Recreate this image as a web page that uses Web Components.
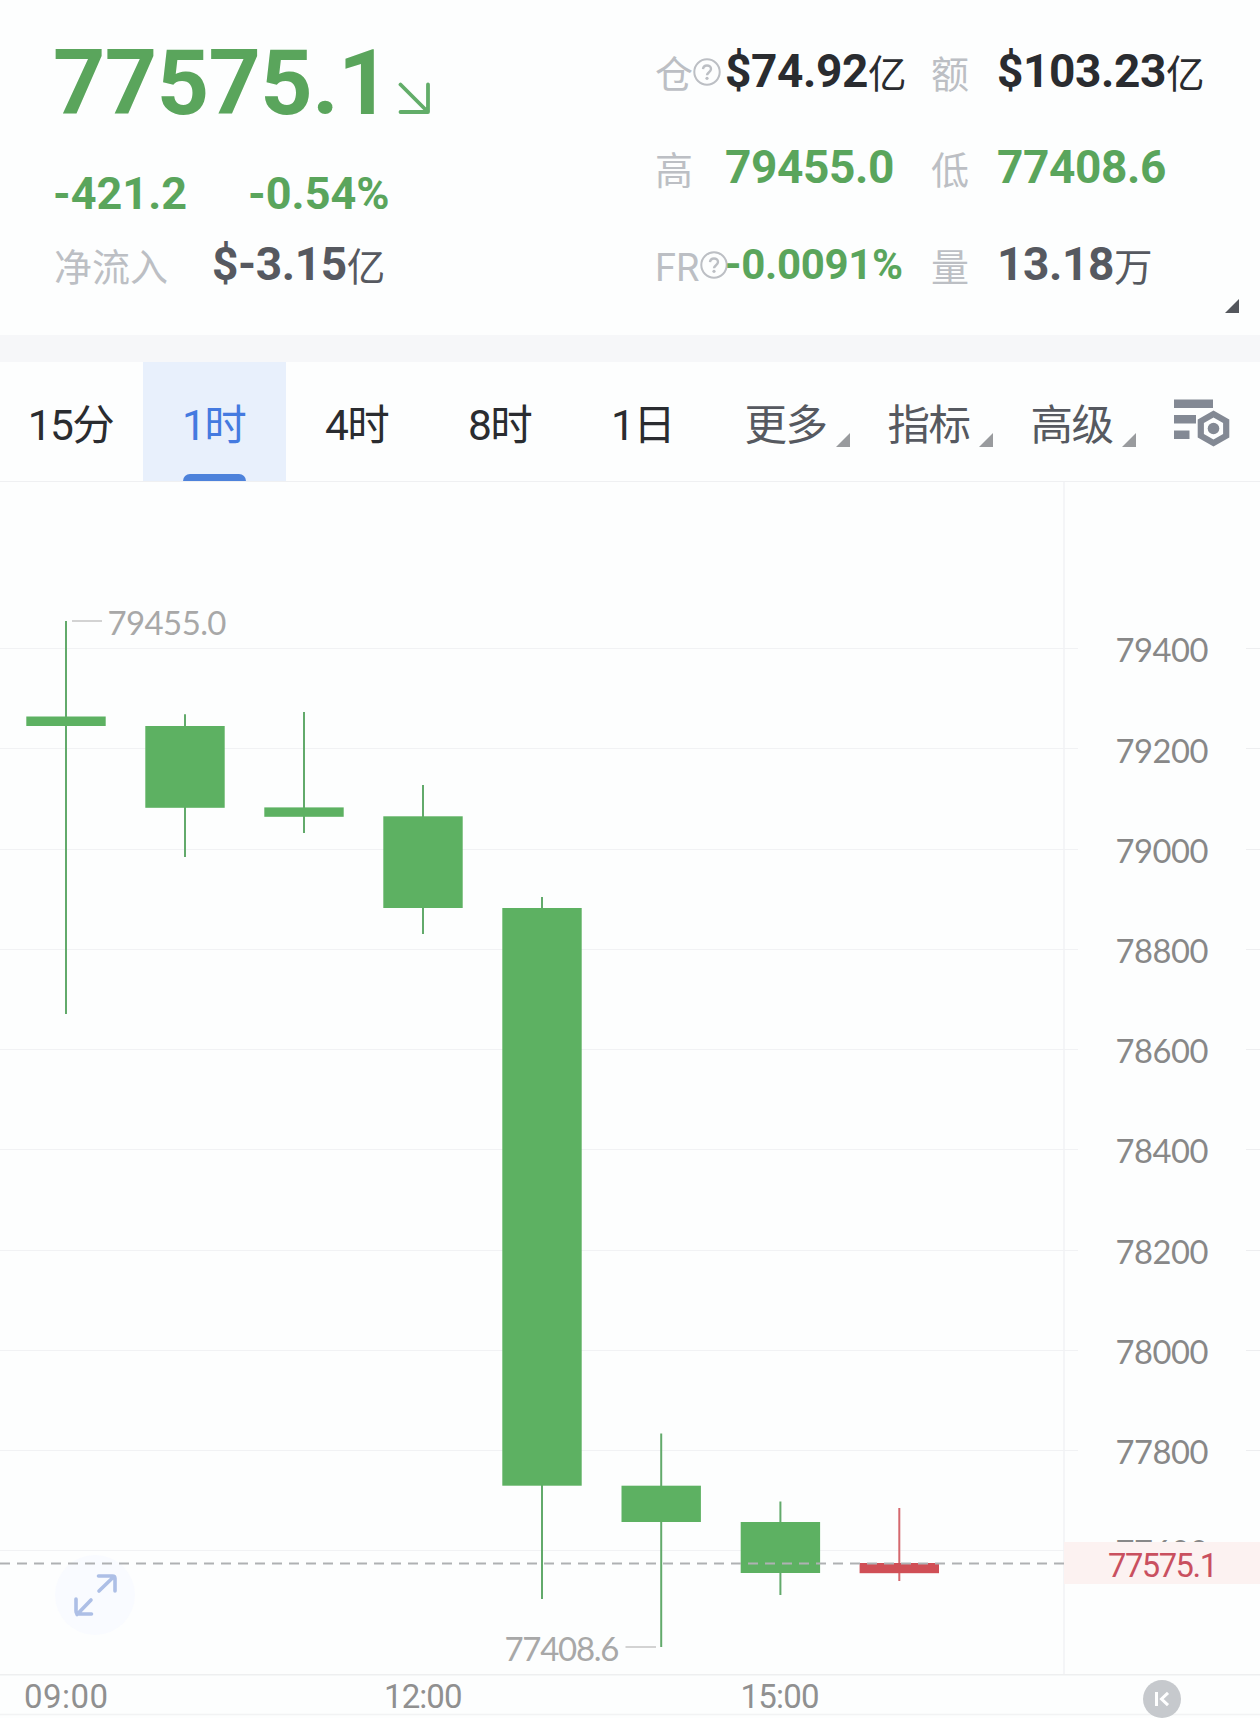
<!DOCTYPE html>
<html lang="zh-CN">
<head>
<meta charset="utf-8">
<title>K线行情</title>
<style>
  html, body { margin: 0; background: #fdfefe; }
  body { font-family: Roboto, "Noto Sans CJK SC", sans-serif; width: 1260px; height: 1718px; overflow: hidden; }
</style>
</head>
<body>
<market-page></market-page>
<script>
const define = (name, html, setup) => {
  const tpl = document.createElement('template');
  tpl.innerHTML = html;
  customElements.define(name, class extends HTMLElement {
    connectedCallback() {
      if (this.shadowRoot) return;
      const root = this.attachShadow({ mode: 'open' });
      root.append(tpl.content.cloneNode(true));
      if (setup) setup(this, root);
    }
  });
};

define('help-icon', `
<style>:host{display:block;width:28px;height:28px;flex:none}svg{display:block}</style>
<svg width="28" height="28" viewBox="0 0 28 28" fill="none" stroke="#bcbfc4" stroke-width="2">
  <circle cx="14" cy="14" r="12.7"/>
  <path d="M10 11.2C10.2 8.6 12 7.5 14 7.5c2.3 0 4 1.5 4 3.6 0 3-4 3.2-4 6.2" stroke-width="2.4"/>
  <circle cx="14" cy="20.3" r="1.6" fill="#bcbfc4" stroke="none"/>
</svg>`);

define('corner-mark', `
<style>:host{display:block;width:14px;height:14px;color:#999b9e}svg{display:block}</style>
<svg width="14" height="14"><path d="M14 0V14H0Z" fill="currentColor"/></svg>`);

define('stat-item', `
<style>
  :host{display:flex;height:60px;line-height:60px;white-space:nowrap}
  .label{display:flex;width:var(--label-width,70px);font-size:38px;color:#bcbfc4;flex:none}
  .label help-icon{margin-top:17px;margin-left:0}
  .name{position:relative;top:4px}
  .value{font-size:46px;font-weight:700;letter-spacing:-.4px}
  ::slotted(small){font-size:38.5px;font-weight:400;margin-left:0;position:relative;top:1px}
  :host([tone=green]) .value{color:#5aa55c}
  :host([tone=dark]) .value{color:#2a2c30}
  :host([tone=slate]) .value{color:#565960}
  :host([compact]) .value{font-size:42px;letter-spacing:-.3px}
  :host([compact]) .value{position:relative;top:1px}
  :host([compact]) .name{letter-spacing:-.1px}
  :host([compact]) help-icon{margin-left:1px;margin-top:17px}
</style>
<div class="label"><span class="name"></span></div><div class="value"><slot></slot></div>`,
(el, root) => {
  root.querySelector('.name').textContent = el.getAttribute('label');
  if (el.hasAttribute('help')) root.querySelector('.label').append(document.createElement('help-icon'));
});

define('price-summary', `
<style>
  :host{display:flex;flex-direction:column;width:600px;padding:33px 0 0 53px;box-sizing:border-box;white-space:nowrap}
  .price{display:flex;height:100px;line-height:100px;font-size:91.4px;font-weight:700;color:#5aa55c;letter-spacing:-.6px}
  .price svg{margin:49px 0 0 8px}
  .delta{display:flex;gap:61px;margin-top:31px;height:60px;line-height:60px;font-size:45px;font-weight:700;color:#5aa55c;letter-spacing:0}
  stat-item{margin-top:10px;--label-width:158px;padding-left:1px}
</style>
<div class="price"><span>77575.1</span>
  <svg width="32" height="33" viewBox="0 0 32 33" fill="none" stroke="#62ad69" stroke-width="3.8" stroke-linecap="round" stroke-linejoin="round"><path d="M2.5 2.5L29 29M30 2.5V30H2.5"/></svg>
</div>
<div class="delta"><span>-421.2</span><span>-0.54%</span></div>
<stat-item label="净流入" tone="slate">$-3.15<small>亿</small></stat-item>`);

define('stats-grid', `
<style>
  :host{display:grid;grid-template-columns:276px 300px;grid-template-rows:96px 97px 60px;padding:41px 0 0 55px;width:605px;box-sizing:border-box;align-content:start}
  .second{--label-width:66px}
</style>
<stat-item label="仓" help tone="dark">$74.92<small>亿</small></stat-item>
<stat-item class="second" label="额" tone="dark">$103.23<small>亿</small></stat-item>
<stat-item label="高" tone="green">79455.0</stat-item>
<stat-item class="second" label="低" tone="green">77408.6</stat-item>
<stat-item label="FR" help compact tone="green">-0.0091%</stat-item>
<stat-item class="second" label="量" tone="slate">13.18<small>万</small></stat-item>`);

define('quote-header', `
<style>
  :host{display:flex;position:relative;height:335px;border-bottom:27px solid #f6f7f9}
  corner-mark{position:absolute;left:1225px;top:299px;color:#54575d}
</style>
<price-summary></price-summary><stats-grid></stats-grid><corner-mark></corner-mark>`);

define('tab-item', `
<style>
  :host{display:flex;position:relative;width:143px;height:119px;justify-content:center;line-height:119px;font-size:42.5px;letter-spacing:-1.6px;color:#2a2c30;white-space:nowrap;flex:none}
  :host([active]){background:#e8f0fc;color:#447ae0}
  :host([active])::after{content:"";position:absolute;left:40px;bottom:0;width:63px;height:7px;border-radius:7px 7px 0 0;background:#4d82db}
  :host([menu]){color:#565960}
  corner-mark{display:none;position:absolute;right:8px;top:71px}
  :host([menu]) corner-mark{display:block}
  .text{position:relative;top:4px;left:-1px}
</style>
<span class="text"><slot></slot></span><corner-mark></corner-mark>`);

define('period-tabs', `
<style>
  :host{display:flex;height:119px;border-bottom:1px solid #eff0f2}
  .settings{margin:36px 0 0 28px}
</style>
<tab-item>15分</tab-item><tab-item active>1时</tab-item><tab-item>4时</tab-item><tab-item>8时</tab-item><tab-item>1日</tab-item>
<tab-item menu>更多</tab-item><tab-item menu>指标</tab-item><tab-item menu>高级</tab-item>
<svg class="settings" width="60" height="52" viewBox="0 0 60 52" fill="#838994">
  <path d="M2 1.5H41V10H2ZM2 17H24V25.5H2ZM2 32.5H17.5V41H2Z"/>
  <path fill-rule="evenodd" d="M41.5 12.5L57.3 21.5V39.5L41.5 48.5L25.7 39.5V21.5ZM41.5 19.6L31.9 25V36L41.5 41.4L51.1 36V25Z"/>
  <circle cx="41.5" cy="30.5" r="5.8"/>
</svg>`);

define('candle-chart', `
<style>:host{display:block;height:1236px}svg{display:block}</style>
<svg width="1260" height="1236" viewBox="0 482 1260 1236"></svg>`,
(el, root) => {
  const out = [];
  const line = (x1, y1, x2, y2, color, w = 1, extra = '') =>
    out.push(`<line x1="${x1}" y1="${y1}" x2="${x2}" y2="${y2}" stroke="${color}" stroke-width="${w}" ${extra}/>`);
  const text = (s, x, y, w, size, color, font = 'Lato') =>
    out.push(`<text x="${x}" y="${y}" textLength="${w}" font-size="${size}" fill="${color}" style="font-family:${font},sans-serif">${s}</text>`);
  for (let i = 0; i < 10; i++) {
    const y = Math.round(648 + i * 100.25) + .5;
    line(0, y, 1078, y, '#f1f2f4');
    line(1246, y, 1260, y, '#edeef0');
    text(79400 - i * 200, 1115.5, 662.4 + i * 100.2, 93, 32.7, '#888');
  }
  line(1064, 481, 1064, 1675, '#f1f2f4', 1.5);
  line(0, 1674.7, 1260, 1674.7, '#eeeff0', 1.6);
  line(0, 1714.6, 1260, 1714.6, '#f2f3f4', 1.5);
  out.push('<circle cx="95" cy="1595" r="40" fill="#f9fbff"/>');
  const candles = [
    [66, 621, 716.5, 726, 1014], [185, 714.3, 726, 807.8, 857], [304, 712, 807.4, 816.8, 833],
    [423, 785, 816.3, 908, 934], [542, 897, 908, 1485.7, 1599], [661.2, 1433.5, 1485.7, 1522, 1647],
    [780.4, 1501.5, 1522, 1573, 1595], [899.3, 1508, 1563, 1573.2, 1581, 1]];
  for (const [x, hi, top, bottom, lo, up] of candles) {
    line(x, hi, x, lo, up ? '#d4686e' : '#62aa6b', 2);
    out.push(`<rect x="${x - 39.7}" y="${top}" width="79.4" height="${bottom - top}" fill="${up ? '#d04f56' : '#5db162'}"/>`);
  }
  line(0, 1563.5, 1064, 1563.5, '#afb1b3', 2, 'stroke-dasharray="10 7"');
  line(72, 621, 102, 621, '#c8c8c8', 1.6);
  text('79455.0', 107.5, 634.5, 119, 33, '#a8a8a8');
  line(625.5, 1647, 656, 1647, '#c8c8c8', 1.6);
  text('77408.6', 504.5, 1660.5, 115, 33, '#a8a8a8');
  out.push('<rect x="1064" y="1542" width="196" height="42" fill="#fcf2f1"/>');
  text('77575.1', 1108, 1577.3, 110, 32.7, '#c9505f', 'Roboto');
  text('09:00', 24, 1708.3, 84, 33, '#909090', 'Roboto');
  text('12:00', 384, 1708.3, 78.5, 33, '#909090', 'Roboto');
  text('15:00', 740.5, 1708.3, 79, 33, '#909090', 'Roboto');
  out.push(`<path d="M99 1591L114 1576.5M98.5 1576H112.5Q115 1576 115 1578.5V1591M91 1600L77 1614.5M76 1599V1611Q76 1614 79 1614H91.5" fill="none" stroke="#adbfe6" stroke-width="3.6" stroke-linecap="round"/>
  <circle cx="1162" cy="1699" r="19" fill="#c6c9cd"/>
  <path d="M1156.5 1692V1706M1168 1692.8L1161.5 1699L1168 1705.2" fill="none" stroke="#fff" stroke-width="3"/>`);
  root.querySelector('svg').innerHTML = out.join('');
});

define('market-page', `
<style>:host{display:flex;flex-direction:column;width:1260px;height:1718px}</style>
<quote-header></quote-header><period-tabs></period-tabs><candle-chart></candle-chart>`);
</script>
</body>
</html>
